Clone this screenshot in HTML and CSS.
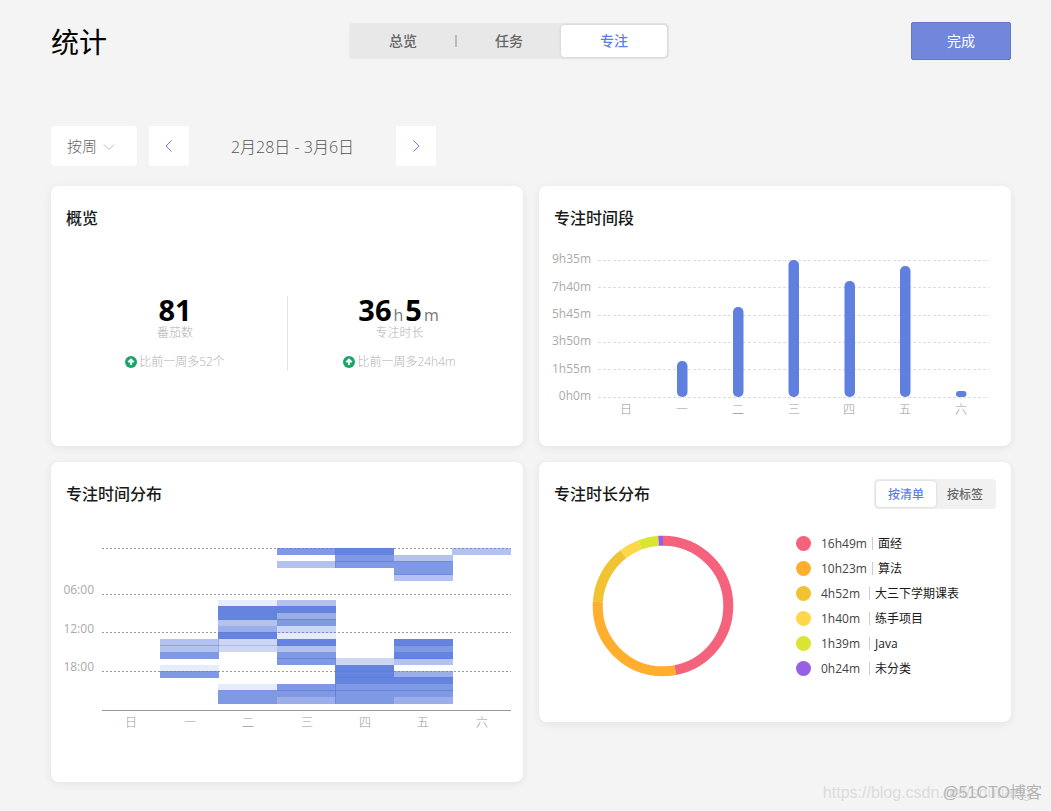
FILE: index.html
```html
<!DOCTYPE html>
<html lang="zh-CN">
<head>
<meta charset="utf-8">
<title>统计</title>
<meta name="viewport" content="width=device-width, initial-scale=1">
<link rel="stylesheet" href="styles.css">
</head>
<body>
<header class="topbar">
  <h1 class="page-title">统计</h1>
  <nav class="tabs">
    <button type="button" class="tab">总览</button>
    <span class="tab-divider"></span>
    <button type="button" class="tab">任务</button>
    <button type="button" class="tab tab-active" aria-current="page">专注</button>
  </nav>
  <button type="button" class="done">完成</button>
</header>

<div class="filters">
  <div class="picker">
    <select class="picker-select" aria-label="统计周期"><option>按周</option></select>
    <svg class="picker-arrow" viewBox="0 0 12 8" aria-hidden="true"><path d="M1 1.5l5 5 5-5"/></svg>
  </div>
  <button type="button" class="step" aria-label="上一周"><svg viewBox="0 0 8 12" aria-hidden="true"><path d="M6.5 .5L1 6l5.500 5.500"/></svg></button>
  <span class="range">2月28日 - 3月6日</span>
  <button type="button" class="step" aria-label="下一周"><svg viewBox="0 0 8 12" aria-hidden="true"><path d="M1.500 .5L7 6l-5.500 5.500"/></svg></button>
</div>

<main class="cards">
  <section class="card">
    <h2 class="card-title">概览</h2>
    <div class="overview">
      <div class="stat">
        <p class="stat-value">81</p>
        <p class="stat-label">番茄数</p>
        <p class="stat-trend"><svg class="up" viewBox="0 0 12 12" aria-hidden="true"><circle cx="6" cy="6" r="6"/><path d="M6 9V4M3.300 6.300L6 3.600l2.700 2.700"/></svg>比前一周多52个</p>
      </div>
      <div class="stat">
        <p class="stat-value">36<span class="unit">h</span>5<span class="unit">m</span></p>
        <p class="stat-label">专注时长</p>
        <p class="stat-trend"><svg class="up" viewBox="0 0 12 12" aria-hidden="true"><circle cx="6" cy="6" r="6"/><path d="M6 9V4M3.300 6.300L6 3.600l2.700 2.700"/></svg>比前一周多24h4m</p>
      </div>
    </div>
  </section>

  <section class="card">
    <h2 class="card-title">专注时间段</h2>
    <svg class="chart" viewBox="0 64 472 176" role="img" aria-label="专注时间段">
      <path class="grid" d="M59 74.500H450M59 101.500H450M59 129.500H450M59 156.500H450M59 183.500H450M59 211.500H450"/>
      <g class="bars">
        <rect x="138" y="175" width="10.500" height="36" rx="5"/>
        <rect x="194" y="121" width="10.500" height="90" rx="5"/>
        <rect x="249.500" y="74" width="10.500" height="137" rx="5"/>
        <rect x="305.500" y="95" width="10.500" height="116" rx="5"/>
        <rect x="361" y="80" width="10.500" height="131" rx="5"/>
        <rect x="417" y="205" width="10.500" height="6" rx="3"/>
      </g>
      <g class="axis axis-end">
        <text x="52" y="77">9h35m</text><text x="52" y="105">7h40m</text><text x="52" y="132">5h45m</text>
        <text x="52" y="159">3h50m</text><text x="52" y="187">1h55m</text><text x="52" y="214">0h0m</text>
      </g>
      <g class="axis axis-mid">
        <text x="87" y="228">日</text><text x="143" y="228">一</text><text x="199" y="228">二</text><text x="255" y="228">三</text>
        <text x="310" y="228">四</text><text x="366" y="228">五</text><text x="422" y="228">六</text>
      </g>
    </svg>
  </section>

  <section class="card card-tall">
    <h2 class="card-title">专注时间分布</h2>
    <svg class="chart" viewBox="0 64 472 210" role="img" aria-label="专注时间分布">
      <path class="hours" d="M51 86.500H460M51 132.500H460M51 170.500H460M51 209.500H460"/>
      <path class="baseline" d="M51 248.500H460"/>
      <g class="cells" transform="translate(109)">
        <rect class="l3" y="177"/><rect class="l3" y="183"/><rect class="l5" y="190"/><rect class="l1" y="203"/><rect class="l5" y="209"/>
      </g>
      <g class="cells" transform="translate(167)">
        <rect class="l1" y="138"/><rect class="l6" y="144"/><rect class="l6" y="151"/><rect class="l3" y="157"/><rect class="l4" y="164"/><rect class="l6" y="170"/><rect class="l2" y="177"/><rect class="l2" y="183"/><rect class="l1" y="222"/><rect class="l5" y="228"/><rect class="l5" y="235"/>
      </g>
      <g class="cells" transform="translate(226)">
        <rect class="l5" y="86"/><rect class="l3" y="99"/><rect class="l3" y="138"/><rect class="l6" y="144"/><rect class="l4" y="151"/><rect class="l5" y="157"/><rect class="l2" y="164"/><rect class="l1" y="170"/><rect class="l6" y="177"/><rect class="l3" y="183"/><rect class="l5" y="190"/><rect class="l5" y="196"/><rect class="l5" y="222"/><rect class="l5" y="228"/><rect class="l4" y="235"/>
      </g>
      <g class="cells" transform="translate(284)">
        <rect class="l6" y="86"/><rect class="l5" y="93"/><rect class="l5" y="99"/><rect class="l2" y="196"/><rect class="l6" y="203"/><rect class="l6" y="209"/><rect class="l6" y="215"/><rect class="l5" y="222"/><rect class="l5" y="228"/><rect class="l5" y="235"/>
      </g>
      <g class="cells" transform="translate(343)">
        <rect class="l3" y="93"/><rect class="l5" y="99"/><rect class="l5" y="106"/><rect class="l3" y="112"/><rect class="l6" y="177"/><rect class="l5" y="183"/><rect class="l6" y="190"/><rect class="l3" y="196"/><rect class="l4" y="209"/><rect class="l6" y="215"/><rect class="l5" y="222"/><rect class="l5" y="228"/><rect class="l4" y="235"/>
      </g>
      <g class="cells" transform="translate(401)"><rect class="l3" y="86"/></g>
      <g class="axis axis-end">
        <text x="43" y="132">06:00</text><text x="43" y="171">12:00</text><text x="43" y="209">18:00</text>
      </g>
      <g class="axis axis-mid">
        <text x="80" y="265">日</text><text x="139" y="265">一</text><text x="197" y="265">二</text><text x="256" y="265">三</text>
        <text x="314" y="265">四</text><text x="372" y="265">五</text><text x="431" y="265">六</text>
      </g>
    </svg>
  </section>

  <section class="card">
    <div class="card-head">
      <h2 class="card-title">专注时长分布</h2>
      <div class="switch">
        <button type="button" class="switch-item switch-active" aria-pressed="true">按清单</button>
        <button type="button" class="switch-item" aria-pressed="false">按标签</button>
      </div>
    </div>
    <div class="share">
      <svg class="donut" viewBox="-71 -71 142 142" role="img" aria-label="专注时长分布">
        <g transform="rotate(-90)">
          <circle r="65.300" pathLength="2147" stroke="#f4627b" stroke-dasharray="1009 2147"/>
          <circle r="65.300" pathLength="2147" stroke="#ffae2d" stroke-dasharray="623 2147" stroke-dashoffset="-1009"/>
          <circle r="65.300" pathLength="2147" stroke="#f1c232" stroke-dasharray="292 2147" stroke-dashoffset="-1632"/>
          <circle r="65.300" pathLength="2147" stroke="#ffd74b" stroke-dasharray="100 2147" stroke-dashoffset="-1924"/>
          <circle r="65.300" pathLength="2147" stroke="#d9e631" stroke-dasharray="99 2147" stroke-dashoffset="-2024"/>
          <circle r="65.300" pathLength="2147" stroke="#975fe4" stroke-dasharray="24 2147" stroke-dashoffset="-2123"/>
        </g>
      </svg>
      <ul class="legend">
        <li><i class="dot red"></i><span class="time">16h49m</span><span class="name">面经</span></li>
        <li><i class="dot orange"></i><span class="time">10h23m</span><span class="name">算法</span></li>
        <li><i class="dot gold"></i><span class="time">4h52m</span><span class="name">大三下学期课表</span></li>
        <li><i class="dot yellow"></i><span class="time">1h40m</span><span class="name">练手项目</span></li>
        <li><i class="dot lime"></i><span class="time">1h39m</span><span class="name">Java</span></li>
        <li><i class="dot violet"></i><span class="time">0h24m</span><span class="name">未分类</span></li>
      </ul>
    </div>
  </section>
</main>

<div class="watermark"><span class="mark-url">https://blog.csdn.net/shutiang</span><span class="mark-site">@51CTO博客</span></div>
</body>
</html>
```
FILE: styles.css
```css
* { box-sizing: border-box; }

body {
  margin: 0;
  padding: 22px 40px 29px 51px;
  background: #f4f4f4;
  color: #191919;
  font-family: "Open Sans", "Noto Sans CJK SC", sans-serif;
  font-size: 12px;
}

h1, h2, p, ul { margin: 0; padding: 0; font-weight: 400; }
button, select { border: 0; font: inherit; cursor: pointer; }

.topbar { display: flex; align-items: center; justify-content: space-between; height: 38px; }
.page-title { padding-top: 2px; color: #000; font-size: 28px; line-height: 38px; }

.tabs {
  display: flex;
  align-items: center;
  height: 36px;
  padding: 2px;
  border-radius: 4px;
  background: #e8e8e8;
}
.tab {
  width: 104px;
  height: 32px;
  padding: 0 0 2px;
  border-radius: 4px;
  background: none;
  color: #666;
  font-size: 14px;
  font-weight: 500;
}
.tab-divider { width: 2px; height: 12px; background: #bbb; }
.tab-active { width: 106px; background: #fff; color: #5f7fe0; box-shadow: 0 0 3px rgba(0, 0, 0, .15); }

.done {
  width: 100px;
  height: 38px;
  padding: 0 0 2px;
  border: 1px solid #6378c4;
  border-radius: 2px;
  background: #7087db;
  color: #fff;
  font-size: 14px;
}

.filters { display: flex; align-items: center; height: 40px; margin: 66px 0 20px; }
.picker { position: relative; margin-right: 12px; }
.picker-select {
  display: block;
  width: 86px;
  height: 40px;
  padding: 0 16px;
  border-radius: 4px;
  background: #fff;
  color: #666;
  font-size: 15px;
  font-weight: 300;
  appearance: none;
}
.picker-arrow {
  position: absolute;
  top: 17px;
  right: 22px;
  width: 12px;
  height: 8px;
  fill: none;
  stroke: #bbb;
  pointer-events: none;
}
.step {
  display: grid;
  place-items: center;
  width: 40px;
  height: 40px;
  padding: 0;
  border-radius: 2px;
  background: #fff;
}
.step svg { width: 8px; height: 12px; fill: none; stroke: #6684df; }
.range { min-width: 207px; color: #555; font-size: 16px; font-weight: 300; text-align: center; white-space: nowrap; }

.cards { display: grid; grid-template-columns: 1fr 1fr; align-items: start; gap: 16px; }
.card {
  min-height: 260px;
  border-radius: 8px;
  background: #fff;
  box-shadow: 0 2px 10px rgba(0, 0, 0, .07);
}
.card-tall { min-height: 320px; }
.card-title { padding: 20px 15px; font-size: 16px; font-weight: 500; line-height: 24px; }
.card-head { display: flex; align-items: center; justify-content: space-between; padding-right: 15px; }

.overview { display: flex; padding: 46px 12px 0; }
.stat { flex: 1; height: 75px; text-align: center; }
.stat:first-child { flex: 0 0 225px; border-right: 1px solid #e3e3e3; }
.stat-value { height: 28px; color: #000; font-size: 29px; font-weight: 700; line-height: 28px; }
.unit { margin: 0 2px; color: #777; font-size: 16px; font-weight: 400; line-height: 1; }
.stat-label { color: #b0b0b0; font-weight: 300; line-height: 18px; }
.stat-trend {
  display: flex;
  align-items: center;
  justify-content: center;
  gap: 2px;
  margin-top: 11px;
  color: #b0b0b0;
  font-weight: 300;
  line-height: 18px;
}
.up { width: 12px; height: 12px; fill: #18a566; }
.up path { fill: none; stroke: #fff; stroke-width: 2; }

.chart { display: block; width: 100%; }
.grid { stroke: #ddd; stroke-dasharray: 3 2; }
.bars { fill: #6080df; }
.axis { fill: #aaa; }
.axis-end { text-anchor: end; }
.axis-mid { fill: #999; font-weight: 300; text-anchor: middle; }

.hours { stroke: #999; stroke-dasharray: 2 2; }
.baseline { stroke: #999; }
.cells { fill: #5d7ddd; }
.cells rect { width: 59px; height: 7px; }
.l1 { fill-opacity: .15; }
.l2 { fill-opacity: .31; }
.l3 { fill-opacity: .47; }
.l4 { fill-opacity: .62; }
.l5 { fill-opacity: .79; }
.l6 { fill-opacity: .95; }

.switch { display: flex; height: 30px; padding: 2px; border-radius: 4px; background: #f1f1f1; }
.switch-item {
  width: 58px;
  padding: 0;
  border-radius: 4px;
  background: none;
  color: #666;
  font-weight: 500;
}
.switch-active { width: 60px; background: #fff; color: #5f7fe0; box-shadow: 0 0 3px rgba(0, 0, 0, .15); }

.share { display: flex; padding: 5px 15px 0 53px; }
.donut { width: 142px; height: 142px; margin: 4px 62px 0 0; fill: none; stroke-width: 10; }
.legend { list-style: none; }
.legend li { display: flex; align-items: center; height: 25px; white-space: nowrap; }
.dot { width: 15px; height: 15px; margin-right: 10px; border-radius: 50%; }
.red { background: #f4627b; }
.orange { background: #ffae2d; }
.gold { background: #f1c232; }
.yellow { background: #ffd74b; }
.lime { background: #d9e631; }
.violet { background: #975fe4; }
.time { min-width: 43px; margin-right: 5px; color: #444; }
.name { padding-left: 5px; border-left: 1px solid #ccc; line-height: 13px; }

.watermark {
  position: absolute;
  right: 9px;
  bottom: 8px;
  display: grid;
  justify-items: end;
  align-items: center;
  line-height: 20px;
  white-space: nowrap;
  pointer-events: none;
}
.mark-url, .mark-site { grid-area: 1 / 1; }
.mark-url { margin-right: 11px; color: #dcdcdc; font-family: "Liberation Sans", sans-serif; font-size: 16px; }
.mark-site { color: #b4b4b4; font-family: "Liberation Sans", "Noto Sans CJK SC", sans-serif; font-size: 16px; }
```
